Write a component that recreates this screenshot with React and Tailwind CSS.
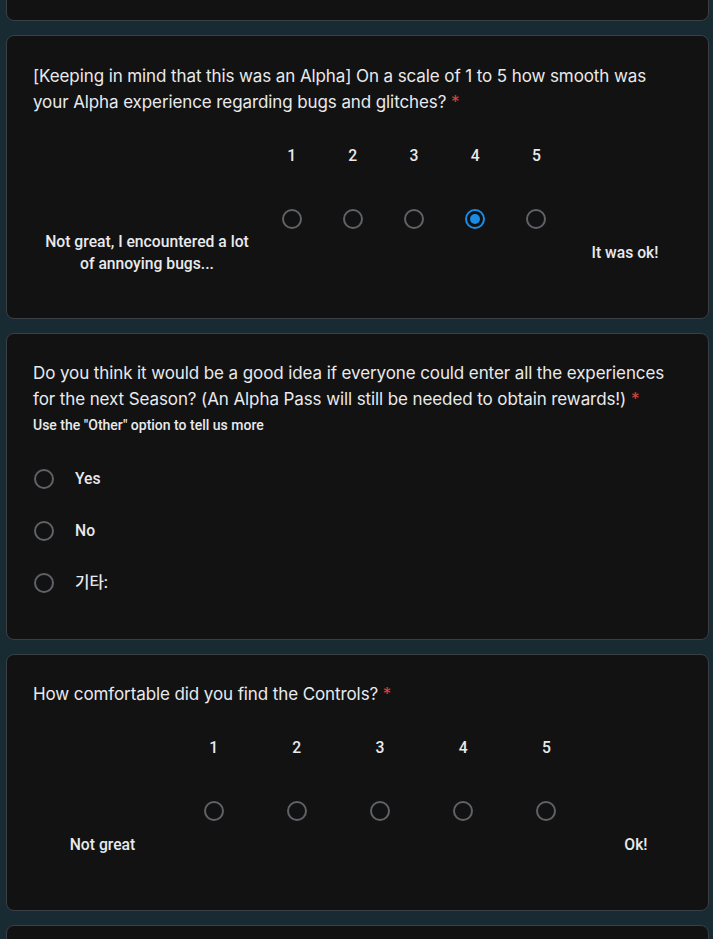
import React from "react";

const QFont = { fontFamily: "Inter, 'Noto Sans', sans-serif" };
const RFont = { fontFamily: "Roboto, 'Noto Sans CJK KR', sans-serif" };

function Radio({ checked }) {
  if (checked) {
    return (
      <div className="w-[20px] h-[20px] rounded-full border-2 border-[#1a8ce6] flex items-center justify-center">
        <div className="w-[10px] h-[10px] rounded-full bg-[#1a8ce6]" />
      </div>
    );
  }
  return <div className="w-[20px] h-[20px] rounded-full border-2 border-[#5f6266]" />;
}

function Card({ children, className = "" }) {
  return (
    <div className={"ml-[6px] w-[703px] bg-[#121212] border border-[#3a3f44] rounded-[8px] " + className}>
      {children}
    </div>
  );
}

function Question({ children }) {
  return (
    <div className="text-[17px] leading-[26px] text-[#e8eaed] tracking-[-0.1px] whitespace-nowrap" style={QFont}>
      {children} <span className="text-[#e2413a]">*</span>
    </div>
  );
}

function Scale({ left, right, leftW, colW, rightW, selected, leftTwo }) {
  return (
    <div className="flex h-[130px] mt-[31px] text-[#e8eaed] font-medium text-[15.7px]" style={RFont}>
      <div className={"shrink-0 text-center leading-[22px] " + (leftTwo ? "pt-[85px]" : "pt-[96px]")} style={{ width: leftW }}>
        {left}
      </div>
      {[1, 2, 3, 4, 5].map((n) => (
        <div key={n} className="shrink-0 flex flex-col items-center" style={{ width: colW }}>
          <div className="leading-[20px]">{n}</div>
          <div className="mt-[43px]">
            <Radio checked={selected === n} />
          </div>
        </div>
      ))}
      <div className="shrink-0 text-center leading-[22px] pt-[96px]" style={{ width: rightW }}>
        {right}
      </div>
    </div>
  );
}

export default function App() {
  return (
    <div className="w-[713px] h-[939px] overflow-hidden bg-[#182a32] relative">
      <div className="absolute left-0 top-[-100px] w-[713px]">
        <Card className="h-[121px]" />
      </div>
      <div className="pt-[35px] flex flex-col gap-[14px]">
        <Card className="px-[26px] pt-[27px] pb-[42px]">
          <Question>
            [Keeping in mind that this was an Alpha] On a scale of 1 to 5 how smooth was
            <br />
            your Alpha experience regarding bugs and glitches?
          </Question>
          <Scale
            left={<>Not great, I encountered a lot<br />of annoying bugs...</>}
            right="It was ok!"
            leftW={228}
            colW={61.2}
            rightW={116}
            selected={4}
            leftTwo
          />
        </Card>
        <Card className="px-[26px] pt-[26px] pb-[46px]">
          <Question>
            Do you think it would be a good idea if everyone could enter all the experiences
            <br />
            for the next Season? (An Alpha Pass will still be needed to obtain rewards!)
          </Question>
          <div className="text-[14px] leading-[16px] font-medium text-[#e8eaed] mt-[5px]" style={RFont}>
            Use the "Other" option to tell us more
          </div>
          <div className="mt-[36px] flex flex-col gap-[32px]">
            {["Yes", "No", "기타:"].map((t) => (
              <div key={t} className="flex items-center h-[20px]">
                <div className="ml-[1px]">
                  <Radio />
                </div>
                <div className="ml-[21px] text-[15.7px] font-medium text-[#e8eaed]" style={RFont}>
                  {t}
                </div>
              </div>
            ))}
          </div>
        </Card>
        <Card className="px-[26px] pt-[26px] pb-[42px]">
          <Question>How comfortable did you find the Controls?</Question>
          <Scale left="Not great" right="Ok!" leftW={139} colW={83.2} rightW={96} selected={0} />
        </Card>
        <Card className="h-[40px]" />
      </div>
    </div>
  );
}
